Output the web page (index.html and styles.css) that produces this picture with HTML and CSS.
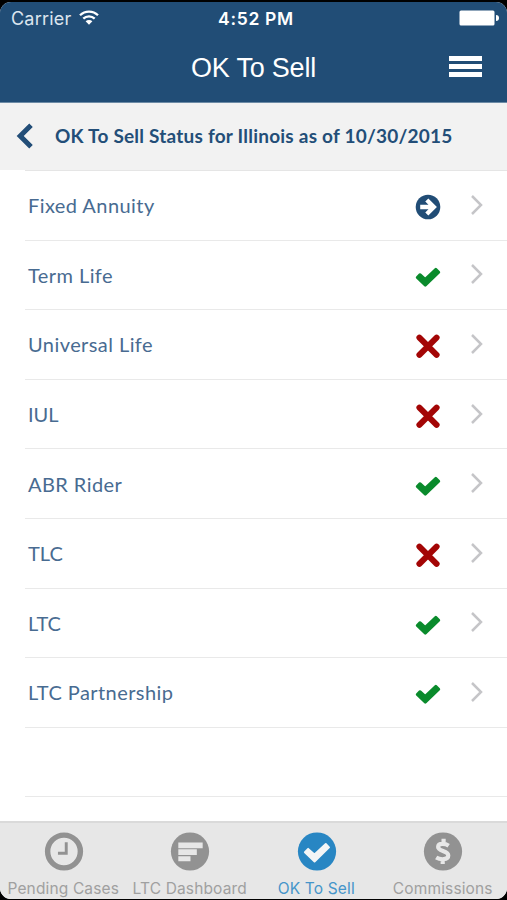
FILE: index.html
```html
<!DOCTYPE html>
<html lang="en">
<head>
<meta charset="utf-8">
<title>OK To Sell</title>
<link rel="stylesheet" href="styles.css">
</head>
<body>
<svg class="defs" aria-hidden="true">
  <symbol id="check" viewBox="0 0 26 26"><path d="M2.2 13.4 5 10.6 10.2 15.2 20.8 5.2 23.8 8.2 10.3 21.3Z" fill="currentColor" stroke="currentColor" stroke-width="2.8" stroke-linejoin="round"/></symbol>
  <symbol id="cross" viewBox="0 0 26 26"><path d="M4.4 4.6 21.6 21.8M21.6 4.6 4.4 21.8" fill="none" stroke="currentColor" stroke-width="6" stroke-linecap="round"/></symbol>
  <symbol id="arrow" viewBox="0 0 26 26"><circle cx="13" cy="13" r="12.3" fill="currentColor"/><path d="M5.2 13H18M11.8 6 18.8 13 11.8 20" fill="none" stroke="#fff" stroke-width="4.4"/></symbol>
  <symbol id="chevron" viewBox="0 0 14 22"><path d="M2 2 11 11 2 20" fill="none" stroke="currentColor" stroke-width="2.5"/></symbol>
</svg>
<div class="screen">
  <header class="header">
    <div class="status">
      <div class="carrier"><span class="carrier-name">Carrier</span>
        <svg class="wifi" viewBox="0 0 20 16"><g fill="none" stroke="#fff" stroke-width="2.3"><path d="M1 5.3A12.8 12.8 0 0 1 19 5.3"/><path d="M4.3 8.7A8.2 8.2 0 0 1 15.7 8.7"/></g><path d="M6.6 11.3A4.8 4.8 0 0 1 13.4 11.3L10 14.7Z" fill="#fff"/></svg>
      </div>
      <div class="time">4:52 PM</div>
      <svg class="battery" viewBox="0 0 40 16"><rect x=".5" y=".5" width="35" height="15" rx="1.5" fill="#fff"/><path d="M37 5a3 3 0 0 1 0 6Z" fill="#fff"/></svg>
    </div>
    <div class="navbar">
      <span></span>
      <h1 class="title">OK To Sell</h1>
      <div class="menu"><i></i><i></i><i></i></div>
    </div>
  </header>
  <div class="subheader">
    <svg class="back" viewBox="0 0 17 26"><path d="M15 2.2 4.2 13 15 23.8" fill="none" stroke="currentColor" stroke-width="5"/></svg>
    <h2 class="subtitle">OK To Sell Status for Illinois as of 10/30/2015</h2>
  </div>
  <ul class="list">
    <li class="row"><span class="label">Fixed Annuity</span><svg class="mark info"><use href="#arrow"/></svg><svg class="chev"><use href="#chevron"/></svg></li>
    <li class="row"><span class="label">Term Life</span><svg class="mark yes"><use href="#check"/></svg><svg class="chev"><use href="#chevron"/></svg></li>
    <li class="row"><span class="label">Universal Life</span><svg class="mark no"><use href="#cross"/></svg><svg class="chev"><use href="#chevron"/></svg></li>
    <li class="row"><span class="label short">IUL</span><svg class="mark no"><use href="#cross"/></svg><svg class="chev"><use href="#chevron"/></svg></li>
    <li class="row"><span class="label">ABR Rider</span><svg class="mark yes"><use href="#check"/></svg><svg class="chev"><use href="#chevron"/></svg></li>
    <li class="row"><span class="label short">TLC</span><svg class="mark no"><use href="#cross"/></svg><svg class="chev"><use href="#chevron"/></svg></li>
    <li class="row"><span class="label short">LTC</span><svg class="mark yes"><use href="#check"/></svg><svg class="chev"><use href="#chevron"/></svg></li>
    <li class="row"><span class="label">LTC Partnership</span><svg class="mark yes"><use href="#check"/></svg><svg class="chev"><use href="#chevron"/></svg></li>
    <li class="row"></li>
  </ul>
  <nav class="tabs">
    <a class="tab"><svg class="tab-icon" viewBox="0 0 40 40"><circle cx="20" cy="20" r="16.8" fill="none" stroke="currentColor" stroke-width="5.6"/><path d="M22.3 10.5V21.8H13.8" fill="none" stroke="currentColor" stroke-width="3"/></svg><span>Pending Cases</span></a>
    <a class="tab"><svg class="tab-icon" viewBox="0 0 40 40"><circle cx="20" cy="20" r="19.6" fill="currentColor"/><path d="M8 10.8H33V16.6H8ZM8 17.8H27V23.6H8ZM8 24.8H20.5V30H8Z" fill="#e7e7e7"/></svg><span>LTC Dashboard</span></a>
    <a class="tab active"><svg class="tab-icon" viewBox="0 0 40 40"><circle cx="20" cy="20" r="19.6" fill="currentColor"/><path d="M7.6 20.7 10.9 17.3 17.4 23 29 12.3 32.3 15.7 17.5 30.3Z" fill="#f3f5f6" stroke="#f3f5f6" stroke-width="2" stroke-linejoin="round"/></svg><span>OK To Sell</span></a>
    <a class="tab"><svg class="tab-icon" viewBox="0 0 40 40"><circle cx="20" cy="20" r="19.6" fill="currentColor"/><path d="M25.8 14C23 12.1 15 10.8 15 15.4C15 20.2 25.4 18.8 25.4 24.2C25.4 29 17 28.6 13 26.2M20.6 7V12M19.7 27.5V32.7" fill="none" stroke="#e7e7e7" stroke-width="4.3"/></svg><span>Commissions</span></a>
  </nav>
</div>
</body>
</html>
```

FILE: styles.css
```css
* { box-sizing: border-box; }
body { margin: 0; background: #000; font-family: "Liberation Sans", sans-serif; }
.defs { position: absolute; width: 0; height: 0; }
.screen { display: flex; flex-direction: column; width: 507px; height: 897px; margin-top: 2px; background: #fff; border-radius: 11px; overflow: hidden; }
.header { height: 101px; flex: none; background: #214d76; color: #fff; border-bottom: 1px solid #6d8ba6; }
.status { display: grid; grid-template-columns: 1fr auto 1fr; align-items: center; height: 32px; padding: 0 8px 0 11px; font-family: Inter, sans-serif; }
.carrier { display: flex; align-items: center; gap: 8px; }
.carrier-name { font-size: 18px; letter-spacing: .2px; color: #dce5ee; }
.wifi { width: 20px; height: 16px; margin-bottom: 1px; }
.time { padding-left: 2px; font-size: 17.5px; font-weight: 600; letter-spacing: .7px; }
.battery { width: 40px; height: 16px; justify-self: end; }
.navbar { display: grid; grid-template-columns: 1fr auto 1fr; align-items: center; height: 68px; padding: 0 25px; }
.title { margin: 0; font-size: 27px; font-weight: 400; letter-spacing: -.2px; }
.menu { display: flex; flex-direction: column; gap: 3px; width: 33px; margin-bottom: 4px; justify-self: end; }
.menu i { height: 5px; background: #fff; }
.subheader { display: flex; align-items: center; height: 67px; flex: none; padding: 0 0 2px 16px; background: #f2f2f2; color: #234e78; }
.back { width: 17px; height: 26px; margin-right: 22px; }
.subtitle { margin: 0; font: 700 19px Lato, sans-serif; letter-spacing: .22px; white-space: nowrap; }
.list { list-style: none; margin: 0 0 0 25px; padding: 0; flex: 1; border-top: 1px solid #e5e5e5; }
.row { display: flex; align-items: center; height: 69.6px; padding: 2px 23px 0 3px; border-bottom: 1px solid #e9e9e9; }
.label { flex: 1; margin-bottom: 2px; font: 400 20px Lato, sans-serif; letter-spacing: .43px; color: #486b91; }
.short { letter-spacing: 0; }
.mark { width: 26px; height: 26px; margin: 2px 29px 0 0; }
.info { color: #214d76; }
.yes { color: #0a8b2c; }
.no { color: #a30505; }
.chev { width: 14px; height: 22px; margin-bottom: 3px; color: #c5c5c8; }
.tabs { display: flex; height: 78px; flex: none; background: #e7e7e7; border-top: 2px solid #dadada; }
.tab { display: flex; flex-direction: column; align-items: center; width: 126.5px; padding-top: 9px; color: #929292; font: 400 15.5px/20px Inter, sans-serif; letter-spacing: .15px; white-space: nowrap; }
.tab span { margin-top: 8px; color: #a0a0a0; }
.tab-icon { width: 40px; height: 40px; margin-left: 1px; }
.active { color: #2886c3; }
.active span { color: #4595ca; }
```
